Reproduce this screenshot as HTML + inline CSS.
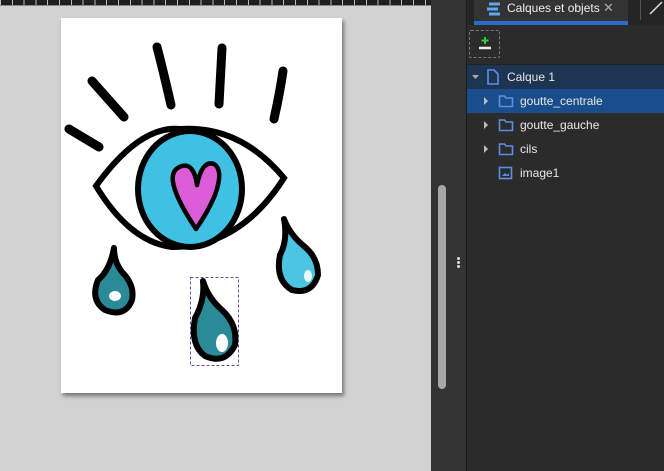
<!DOCTYPE html>
<html><head><meta charset="utf-8"><style>
*{margin:0;padding:0;box-sizing:border-box}
body{width:664px;height:471px;overflow:hidden;background:#d2d2d2;font-family:"Liberation Sans",sans-serif;position:relative}
.abs{position:absolute}
.row{position:absolute;left:467px;width:197px;height:24px;color:#e8e8e8;font-size:12px;line-height:24px}
</style></head><body>
<div class="abs" style="left:0;top:0;width:431px;height:5px;background:#1e1e1e;background-image:repeating-linear-gradient(90deg,#bbb 0 1px,transparent 1px 11.8px)"></div>
<div class="abs" style="left:0;top:5px;width:431px;height:1px;background:#888"></div>
<div class="abs" style="left:61px;top:18px;width:281px;height:375px;background:#fff;box-shadow:2px 3px 4px rgba(0,0,0,0.45)"></div>
<svg class="abs" style="left:0;top:0" width="431" height="471">
<g stroke="#000" stroke-linecap="round" fill="none" stroke-width="9">
<path d="M69 129 L99 147"/><path d="M92 81 L124 117"/><path d="M157 47 Q163 70 171 105"/><path d="M222 48 L219 104"/><path d="M283 71 Q280 92 274 119"/>
</g>
<path d="M96 186 Q140 125 180 129 Q240 125 284 178 Q240 247 172 247 Q130 242 96 186Z" fill="#fff" stroke="#000" stroke-width="6"/>
<ellipse cx="190" cy="189" rx="52" ry="58" fill="#3ec1e3" stroke="#000" stroke-width="6"/>
<path d="M196 229 Q180 205 175 190 Q168 170 182 166 Q194 163 197 185 Q202 160 214 164 Q224 170 215 195 Q208 212 196 229Z" fill="#dc5bd6" stroke="#000" stroke-width="4.5" stroke-linejoin="round"/>
<g stroke="#000" stroke-width="6" stroke-linejoin="round">
<path d="M114 248 Q110 270 98 280 Q90 300 105 310 Q125 318 132 300 Q135 285 122 272 Q114 262 114 248Z" fill="#2a8a96"/>
<path d="M203 281 Q205 300 195 318 Q190 345 205 356 Q225 365 235 345 Q238 325 222 310 Q208 298 203 281Z" fill="#2a8a96"/>
<path d="M284 219 Q288 240 280 255 Q275 280 292 290 Q312 295 318 275 Q318 258 305 247 Q290 235 284 219Z" fill="#4cc5e2"/>
</g>
<ellipse cx="115" cy="296" rx="6" ry="5" fill="#fff"/>
<ellipse cx="222" cy="343" rx="6" ry="9" fill="#fff"/>
<ellipse cx="308" cy="276" rx="4" ry="6" fill="#e8fbff"/>
<rect x="190.5" y="277.5" width="48" height="88" fill="none" stroke="#5a55a8" stroke-dasharray="3 2"/>
</svg>
<div class="abs" style="left:431px;top:0;width:35px;height:471px;background:#333"></div>
<div class="abs" style="left:438px;top:185px;width:8px;height:204px;border-radius:4px;background:#a8a8a8"></div>
<div class="abs" style="left:457px;top:257px;width:3px;height:3px;border-radius:2px;background:#ddd;box-shadow:0 4px #ddd,0 8px #ddd"></div>
<div class="abs" style="left:466px;top:0;width:1px;height:471px;background:#1c1c1c"></div>
<div class="abs" style="left:467px;top:0;width:197px;height:471px;background:#2b2b2b"></div>
<div class="abs" style="left:467px;top:0;width:197px;height:25px;background:#252525"></div>
<div class="abs" style="left:474px;top:0;width:154px;height:25px;background:#333"></div>
<div class="abs" style="left:474px;top:21px;width:154px;height:4px;background:#2b6cc6"></div>
<svg class="abs" style="left:484px;top:1px" width="20" height="16"><path d="M5 3h11M3 8h11M5 13h11" stroke="#5aa8f0" stroke-width="3"/></svg>
<div class="abs" style="left:507px;top:0;color:#eee;font-size:12px;line-height:16px">Calques et objets</div>
<div class="abs" style="left:603px;top:0;color:#aaa;font-size:13px;line-height:15px">✕</div>
<div class="abs" style="left:640px;top:0;width:1px;height:20px;background:#555"></div>
<svg class="abs" style="left:648px;top:0" width="16" height="16"><path d="M2 14 L14 2" stroke="#ddd" stroke-width="1.5"/></svg>
<div class="abs" style="left:469px;top:30px;width:31px;height:28px;border:1px dashed #777;border-radius:2px"></div>
<svg class="abs" style="left:476px;top:35px" width="18" height="18"><path d="M9 2v7M5.5 5.5h7" stroke="#3c3" stroke-width="2"/><path d="M3 13h12" stroke="#eee" stroke-width="2.5"/></svg>
<div class="abs" style="left:467px;top:64px;width:197px;height:1px;background:#222"></div>
<div class="row" style="top:65px;background:#1d3553">
<svg class="abs" style="left:3px;top:0" width="12" height="24"><path d="M2 10h7l-3.5 4z" fill="#aaa"/></svg>
<svg class="abs" style="left:19px;top:4px" width="14" height="16"><path d="M2 1h6l4 4v10H2z" fill="none" stroke="#5a8fe6" stroke-width="1.6"/></svg>
<span class="abs" style="left:40px">Calque 1</span></div>
<div class="row" style="top:89px;background:#1a4d8b">
<svg class="abs" style="left:14px;top:0" width="10" height="24"><path d="M3 8v8l4-4z" fill="#bbb"/></svg>
<svg class="abs" style="left:31px;top:5px" width="16" height="14"><path d="M1.5 2h5l1.5 2h6.5v8.5h-13z" fill="none" stroke="#5a8fe6" stroke-width="1.6"/></svg>
<span class="abs" style="left:53px">goutte_centrale</span></div>
<div class="row" style="top:113px">
<svg class="abs" style="left:14px;top:0" width="10" height="24"><path d="M3 8v8l4-4z" fill="#bbb"/></svg>
<svg class="abs" style="left:31px;top:5px" width="16" height="14"><path d="M1.5 2h5l1.5 2h6.5v8.5h-13z" fill="none" stroke="#5a8fe6" stroke-width="1.6"/></svg>
<span class="abs" style="left:53px">goutte_gauche</span></div>
<div class="row" style="top:137px">
<svg class="abs" style="left:14px;top:0" width="10" height="24"><path d="M3 8v8l4-4z" fill="#bbb"/></svg>
<svg class="abs" style="left:31px;top:5px" width="16" height="14"><path d="M1.5 2h5l1.5 2h6.5v8.5h-13z" fill="none" stroke="#5a8fe6" stroke-width="1.6"/></svg>
<span class="abs" style="left:53px">cils</span></div>
<div class="row" style="top:161px">
<svg class="abs" style="left:31px;top:5px" width="16" height="14"><rect x="1.5" y="1.5" width="12" height="11" fill="none" stroke="#5a8fe6" stroke-width="1.6"/><path d="M4 10l3-3 2 2 2-2v3z" fill="#5a8fe6"/></svg>
<span class="abs" style="left:53px">image1</span></div>
</body></html>
